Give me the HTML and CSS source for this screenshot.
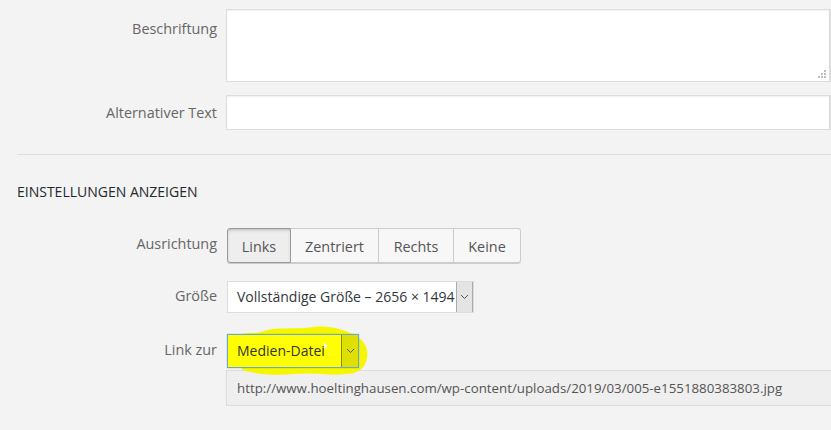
FILE: index.html
```html
<!DOCTYPE html>
<html lang="de">
<head>
<meta charset="utf-8">
<title>Einstellungen</title>
<link rel="stylesheet" href="styles.css">
</head>
<body>
<div class="panel">
  <div class="row row-caption">
    <label class="label">Beschriftung</label>
    <div class="field textarea-wrap">
      <div class="textarea"></div>
      <svg class="grip" width="10" height="9" viewBox="0 0 10 9"><rect x="7" y="0" width="2" height="2" fill="#bbb"/><rect x="4" y="3" width="2" height="2" fill="#bbb"/><rect x="7" y="3" width="2" height="2" fill="#bbb"/><rect x="1" y="6" width="2" height="2" fill="#bbb"/><rect x="4" y="6" width="2" height="2" fill="#bbb"/><rect x="7" y="6" width="2" height="2" fill="#bbb"/></svg>
    </div>
  </div>
  <div class="row row-alt">
    <label class="label">Alternativer Text</label>
    <div class="field"><div class="input"></div></div>
  </div>

  <div class="divider"></div>
  <h2 class="heading">EINSTELLUNGEN ANZEIGEN</h2>

  <div class="row row-align">
    <label class="label">Ausrichtung</label>
    <div class="btn-group">
      <span class="btn active">Links</span>
      <span class="btn">Zentriert</span>
      <span class="btn">Rechts</span>
      <span class="btn">Keine</span>
    </div>
  </div>

  <div class="row row-size">
    <label class="label">Größe</label>
    <div class="select size-select">
      <span class="select-text">Vollständige Größe – 2656 × 1494</span>
      <span class="select-arrow"><svg width="9" height="6" viewBox="0 0 9 6"><path d="M1 1l3.5 3.5L8 1" fill="none" stroke="#555" stroke-width="1"/></svg></span>
    </div>
  </div>

  <div class="row row-link">
    <label class="label">Link zur</label>
    <div class="link-col">
      <div class="link-select-wrap">
        <svg class="marker" width="140" height="56" viewBox="0 0 140 56"><path d="M26 8 C40 2 60 6 80 3 C95 1 108 6 118 10 C128 14 134 24 132 34 C130 44 124 50 110 50 C95 52 80 48 60 50 C40 52 20 50 8 46 C2 42 2 14 8 10 C14 8 20 10 26 8 Z" fill="#f6f600"/></svg>
        <div class="select link-select">
          <span class="select-text">Medien-Datei</span>
          <span class="cursor"></span>
          <span class="select-arrow"><svg width="9" height="6" viewBox="0 0 9 6"><path d="M1 1l3.5 3.5L8 1" fill="none" stroke="#555" stroke-width="1"/></svg></span>
        </div>
      </div>
      <div class="url">http://www.hoeltinghausen.com/wp-content/uploads/2019/03/005-e1551880383803.jpg</div>
    </div>
  </div>
</div>
</body>
</html>
```

FILE: styles.css
```css
html, body {
  margin: 0;
  padding: 0;
}
body {
  background: #f3f3f3;
  font-family: "Open Sans", "Noto Sans", "Liberation Sans", sans-serif;
  font-size: 14px;
  color: #444;
  width: 831px;
  height: 430px;
  overflow: hidden;
}
.panel {
  padding-top: 9px;
}
.row {
  display: flex;
  align-items: flex-start;
}
.label {
  width: 217px;
  flex: 0 0 217px;
  padding-right: 9px;
  text-align: right;
  color: #666;
  line-height: 20px;
  font-size: 14.4px;
  box-sizing: content-box;
}
.field {
  flex: 1;
  position: relative;
}
.row-caption .label { padding-top: 10px; }
.textarea {
  height: 71px;
  background: #fff;
  border: 1px solid #ddd;
  border-right: 2px solid #ddd;
  box-shadow: inset 0 1px 2px rgba(0,0,0,0.06);
}
.grip {
  position: absolute;
  right: 4px;
  bottom: 3px;
}
.row-alt {
  margin-top: 13px;
}
.row-alt .label { padding-top: 8px; }
.input {
  height: 33px;
  background: #fff;
  border: 1px solid #ddd;
  border-right: 2px solid #ddd;
  box-shadow: inset 0 1px 2px rgba(0,0,0,0.06);
}
.divider {
  margin: 24px 0 0 17px;
  height: 1px;
  background: #ddd;
}
.heading {
  margin: 28px 0 0 17px;
  font-size: 14px;
  font-weight: normal;
  line-height: 18px;
  color: #23282d;
}
.row-align {
  margin-top: 27px;
}
.row-align .label { padding-top: 6px; }
.btn-group {
  display: flex;
  margin-left: 1px;
  border-radius: 3px;
  box-shadow: 0 1px 0 #ccc;
}
.btn {
  display: block;
  height: 33px;
  line-height: 35px;
  padding: 0 12px;
  border: 1px solid #ccc;
  border-left: none;
  background: #f7f7f7;
  color: #555;
  font-size: 14.4px;
  text-align: center;
}
.btn:first-child {
  border-left: 1px solid #ccc;
  border-radius: 3px 0 0 3px;
}
.btn:last-child {
  border-radius: 0 3px 3px 0;
}
.btn.active {
  background: #eee;
  border-color: #999;
  box-shadow: inset 0 2px 5px -3px rgba(0,0,0,0.5);
  width: 38px;
}
.btn:nth-child(2) { width: 63px; }
.btn:nth-child(3) { width: 50px; }
.btn:nth-child(4) { width: 42px; }
.row-size {
  margin-top: 18px;
}
.row-size .label { padding-top: 5px; }
.select {
  position: relative;
  display: flex;
  align-items: stretch;
  margin-left: 1px;
  background: #fff;
  border: 1px solid #ddd;
  box-sizing: border-box;
}
.size-select {
  width: 247px;
  height: 32px;
}
.select-text {
  flex: 1;
  padding-left: 9px;
  line-height: 30px;
  color: #32373c;
  white-space: nowrap;
}
.select-arrow {
  width: 15px;
  flex: 0 0 15px;
  background: #e4e4e4;
  border-left: 1px solid #aaa;
  border-right: 1px solid #aaa;
  display: flex;
  align-items: center;
  justify-content: center;
}
.row-link {
  margin-top: 21px;
}
.row-link .label { padding-top: 6px; }
.link-col {
  flex: 1;
}
.link-select-wrap {
  position: relative;
  width: 132px;
  margin-left: 1px;
  height: 34px;
}
.marker {
  position: absolute;
  left: 8px;
  top: -10px;
  z-index: 0;
}
.link-select {
  position: relative;
  z-index: 1;
  margin-left: 0;
  width: 132px;
  height: 34px;
  background: #ffff00;
  border: 1px solid #6aa6d6;
  box-shadow: 0 0 1px rgba(30,140,190,0.6);
}
.link-select .select-text {
  padding-left: 9px;
  line-height: 32px;
  color: #333;
}
.link-select .select-arrow {
  background: #e0e000;
  border-left: 1px solid #8a8a2a;
  border-right: none;
  width: 16px;
  flex-basis: 16px;
}
.cursor {
  position: absolute;
  left: 96px;
  top: 8px;
  width: 0;
  height: 0;
  border-top: 3px solid transparent;
  border-bottom: 3px solid transparent;
  border-left: 4px solid #fff;
}
.url {
  margin-top: 2px;
  height: 34px;
  line-height: 34px;
  padding-left: 10px;
  background: #efefef;
  border: 1px solid #ddd;
  border-right: none;
  color: #555;
  font-size: 13.3px;
  white-space: nowrap;
  overflow: hidden;
}
```
